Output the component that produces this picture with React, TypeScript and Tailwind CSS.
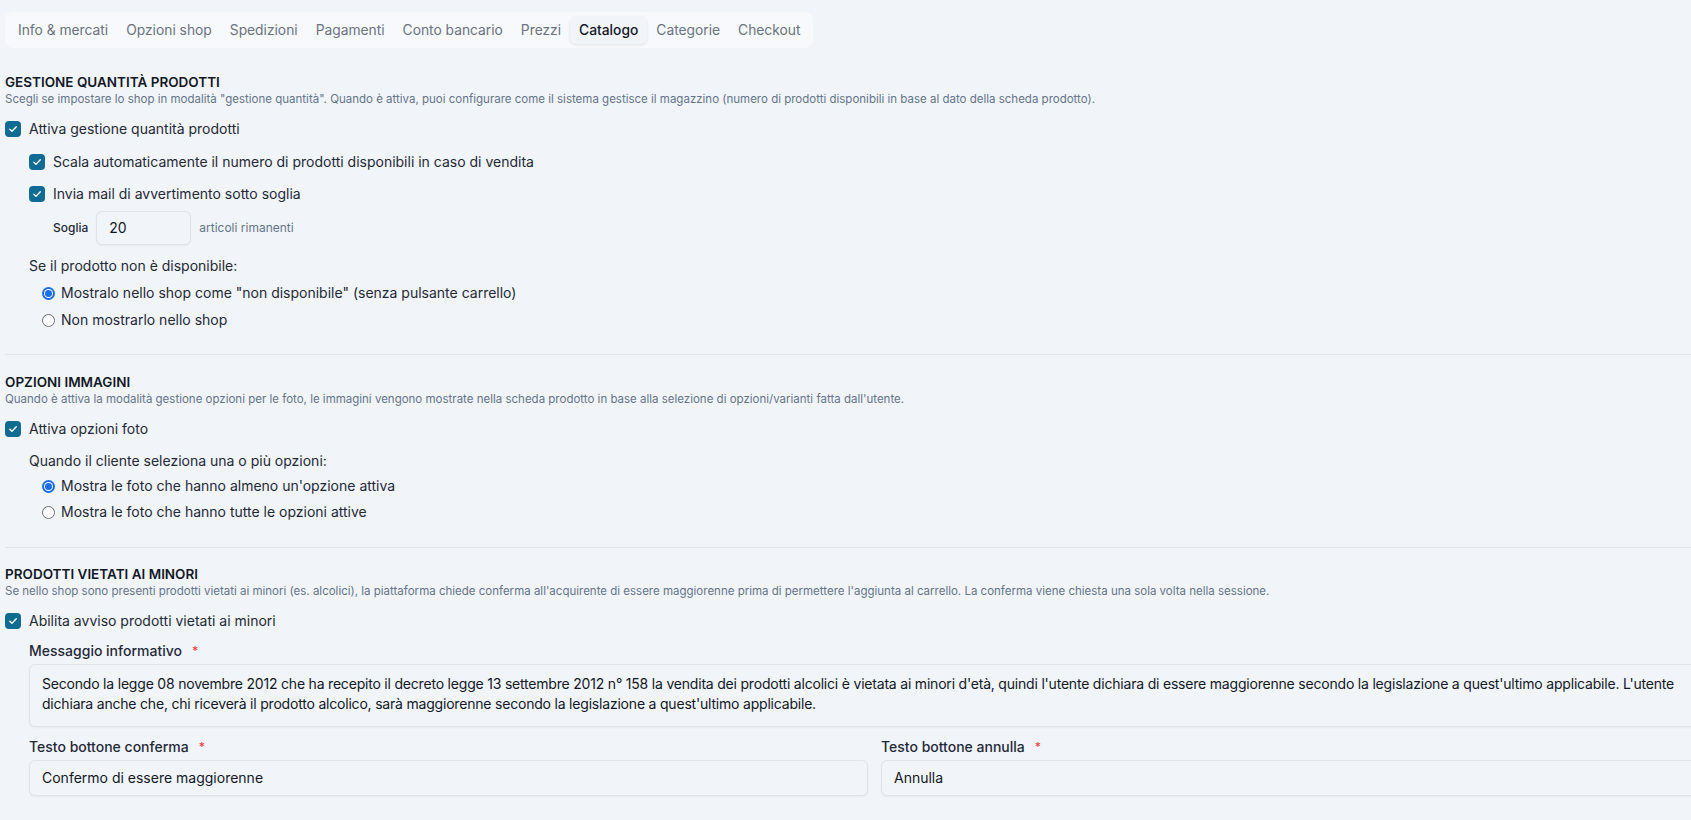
import React from "react"

const tabs = [
  "Info & mercati",
  "Opzioni shop",
  "Spedizioni",
  "Pagamenti",
  "Conto bancario",
  "Prezzi",
  "Catalogo",
  "Categorie",
  "Checkout",
]

function Check({ label, className = "" }: { label: string; className?: string }) {
  return (
    <label className={`flex items-center gap-2 h-5 ${className}`}>
      <span className="w-4 h-4 rounded-[4px] bg-[#106c93] flex items-center justify-center shrink-0">
        <svg width="10" height="10" viewBox="0 0 10 10" fill="none">
          <path d="M1.8 5.2 4 7.3 8.3 2.7" stroke="white" strokeWidth="1.3" strokeLinecap="round" strokeLinejoin="round" />
        </svg>
      </span>
      <span className="text-sm text-[#1f2937]">{label}</span>
    </label>
  )
}

function Radio({ label, checked, className = "" }: { label: string; checked?: boolean; className?: string }) {
  return (
    <label className={`flex items-center gap-1.5 h-5 ml-[37px] ${className}`}>
      {checked ? (
        <span className="w-[13px] h-[13px] rounded-full bg-[#1a6ee6] flex items-center justify-center shrink-0">
          <span className="w-[9px] h-[9px] rounded-full bg-white flex items-center justify-center">
            <span className="w-[7px] h-[7px] rounded-full bg-[#1a6ee6]" />
          </span>
        </span>
      ) : (
        <span className="w-[13px] h-[13px] rounded-full border border-[#707070] bg-white shrink-0" />
      )}
      <span className="text-sm text-[#1f2937]">{label}</span>
    </label>
  )
}

function Heading({ title, desc, className = "" }: { title: string; desc: string; className?: string }) {
  return (
    <div className={className}>
      <h3 className="text-[13.5px] leading-[18px] font-semibold text-[#111827] uppercase">{title}</h3>
      <p className="text-[11.5px] leading-4 text-[#64748b]">{desc}</p>
    </div>
  )
}

function Required({ label }: { label: string }) {
  return (
    <div className="h-5 flex items-center text-sm font-medium text-[#1f2937]">
      {label}
      <span className="ml-2.5 text-[#ef4444] text-xs">*</span>
    </div>
  )
}

const fieldBox =
  "rounded-md border border-[#e0e4ea] bg-[#f1f4f9] shadow-[0_1px_2px_rgba(15,23,42,0.05)] text-sm text-[#111827]"

export default function App() {
  return (
    <div className="w-full min-h-screen overflow-hidden bg-[#f1f4f9] font-['Inter',sans-serif]">
      <div className="w-[1720px] pt-3 pl-[5px]">
        {/* Tabs */}
        <div className="inline-flex items-center p-1 rounded-lg bg-[#f7f9fc]">
          {tabs.map((t) =>
            t === "Catalogo" ? (
              <div
                key={t}
                className="h-7 px-[9px] flex items-center rounded-md bg-[#f1f4f9] shadow-[0_1px_3px_rgba(15,23,42,0.10)] text-[13.8px] font-medium text-[#111827]"
              >
                {t}
              </div>
            ) : (
              <div key={t} className="h-7 px-[9px] flex items-center text-[13.8px] text-[#6b7280]">
                {t}
              </div>
            )
          )}
        </div>

        {/* Gestione quantità */}
        <Heading
          className="mt-[25px]"
          title="Gestione quantità prodotti"
          desc={`Scegli se impostare lo shop in modalità "gestione quantità". Quando è attiva, puoi configurare come il sistema gestisce il magazzino (numero di prodotti disponibili in base al dato della scheda prodotto).`}
        />
        <Check className="mt-3" label="Attiva gestione quantità prodotti" />
        <Check className="mt-[13px] ml-6" label="Scala automaticamente il numero di prodotti disponibili in caso di vendita" />
        <Check className="mt-3 ml-6" label="Invia mail di avvertimento sotto soglia" />
        <div className="mt-[7px] ml-12 flex items-center gap-2">
          <span className="text-xs font-medium text-[#1f2937]">Soglia</span>
          <div className={`w-[95px] h-[34px] flex items-center px-3 ${fieldBox}`}>20</div>
          <span className="text-xs text-[#64748b]">articoli rimanenti</span>
        </div>
        <p className="mt-[11px] ml-6 h-5 flex items-center text-sm text-[#1f2937]">Se il prodotto non è disponibile:</p>
        <Radio className="mt-[7px]" checked label={`Mostralo nello shop come "non disponibile" (senza pulsante carrello)`} />
        <Radio className="mt-[7px]" label="Non mostrarlo nello shop" />

        <div className="mt-6 h-px bg-[#e2e6ec]" />

        {/* Opzioni immagini */}
        <Heading
          className="mt-[18px]"
          title="Opzioni immagini"
          desc="Quando è attiva la modalità gestione opzioni per le foto, le immagini vengono mostrate nella scheda prodotto in base alla selezione di opzioni/varianti fatta dall'utente."
        />
        <Check className="mt-3" label="Attiva opzioni foto" />
        <p className="mt-3 ml-6 h-5 flex items-center text-sm text-[#1f2937]">Quando il cliente seleziona una o più opzioni:</p>
        <Radio className="mt-[5px]" checked label="Mostra le foto che hanno almeno un'opzione attiva" />
        <Radio className="mt-[6px]" label="Mostra le foto che hanno tutte le opzioni attive" />

        <div className="mt-[25px] h-px bg-[#e2e6ec]" />

        {/* Prodotti vietati ai minori */}
        <Heading
          className="mt-[17px]"
          title="Prodotti vietati ai minori"
          desc="Se nello shop sono presenti prodotti vietati ai minori (es. alcolici), la piattaforma chiede conferma all'acquirente di essere maggiorenne prima di permettere l'aggiunta al carrello. La conferma viene chiesta una sola volta nella sessione."
        />
        <Check className="mt-3" label="Abilita avviso prodotti vietati ai minori" />
        <div className="ml-6">
          <div className="mt-2.5">
            <Required label="Messaggio informativo" />
          </div>
          <div className={`mt-[3px] h-[63px] px-3 py-[9px] leading-5 tracking-[-0.2px] whitespace-nowrap overflow-hidden ${fieldBox}`}>
            Secondo la legge 08 novembre 2012 che ha recepito il decreto legge 13 settembre 2012 n° 158 la vendita dei prodotti alcolici è vietata ai minori d'età, quindi l'utente dichiara di essere maggiorenne secondo la legislazione a quest'ultimo applicabile. L'utente
            <br />
            dichiara anche che, chi riceverà il prodotto alcolico, sarà maggiorenne secondo la legislazione a quest'ultimo applicabile.
          </div>
          <div className="mt-2.5 grid grid-cols-2 gap-x-[13px]">
            <div>
              <Required label="Testo bottone conferma" />
              <div className={`mt-[3px] h-9 px-3 flex items-center ${fieldBox}`}>Confermo di essere maggiorenne</div>
            </div>
            <div>
              <Required label="Testo bottone annulla" />
              <div className={`mt-[3px] h-9 px-3 flex items-center ${fieldBox}`}>Annulla</div>
            </div>
          </div>
        </div>
      </div>
    </div>
  )
}
